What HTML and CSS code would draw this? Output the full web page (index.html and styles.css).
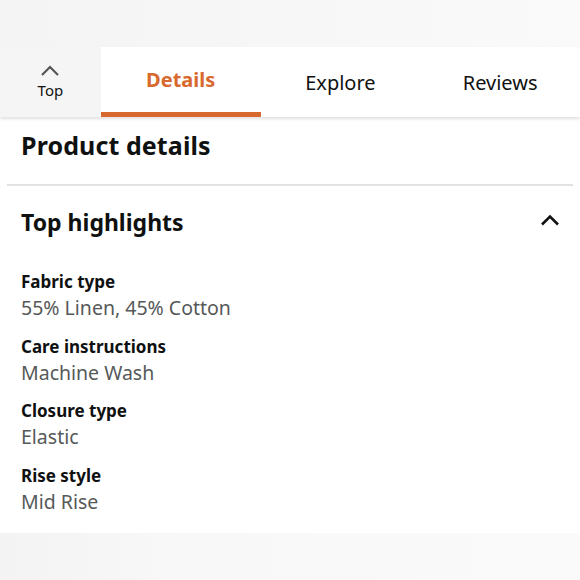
FILE: index.html
```html
<!DOCTYPE html>
<html>
<head>
<meta charset="utf-8">
<link rel="stylesheet" href="styles.css">
</head>
<body>
<div class="strip"></div>
<nav class="tabbar">
  <div class="tab-top">
    <svg class="top-chev" width="20" height="12" viewBox="0 0 20 12"><path d="M2 10 L10 2 L18 10" fill="none" stroke="#555" stroke-width="2.2"/></svg>
    <span class="top-label">Top</span>
  </div>
  <div class="tab active">Details</div>
  <div class="tab">Explore</div>
  <div class="tab">Reviews</div>
</nav>
<main class="card">
  <h1 class="title">Product details</h1>
  <hr class="divider">
  <div class="hl-head">
    <h2 class="hl-title">Top highlights</h2>
    <svg class="hl-chev" width="20" height="12" viewBox="0 0 20 12"><path d="M2 10.5 L10 2.5 L18 10.5" fill="none" stroke="#111" stroke-width="2.6"/></svg>
  </div>
  <dl class="attrs">
    <div class="attr"><dt>Fabric type</dt><dd>55% Linen, 45% Cotton</dd></div>
    <div class="attr"><dt>Care instructions</dt><dd>Machine Wash</dd></div>
    <div class="attr"><dt>Closure type</dt><dd>Elastic</dd></div>
    <div class="attr"><dt>Rise style</dt><dd>Mid Rise</dd></div>
  </dl>
</main>
<div class="foot"></div>
</body>
</html>
```
FILE: styles.css
```css
* { box-sizing: border-box; }
body {
  margin: 0;
  background: #f8f8f8;
  font-family: "Noto Sans", "Liberation Sans", sans-serif;
  color: #0f1111;
}
.strip {
  height: 47px;
  background: linear-gradient(90deg, #f4f4f4, #f8f7f7 50%, #fafafa);
}
.tabbar {
  display: flex;
  height: 70px;
  background: #fff;
  box-shadow: 0 2px 3px rgba(0,0,0,0.12);
  position: relative;
  z-index: 1;
}
.tab-top {
  width: 101px;
  background: #f5f5f5;
  display: flex;
  flex-direction: column;
  align-items: center;
  padding-top: 18px;
}
.top-chev { display: block; }
.top-label {
  font-size: 15px;
  line-height: 20px;
  margin-top: 3px;
  color: #111;
}
.tab {
  width: 160px;
  display: flex;
  justify-content: center;
  align-items: center;
  font-size: 20px;
  padding-top: 1px;
  color: #111;
}
.tab.active {
  color: #d8692e;
  font-weight: 700;
  border-bottom: 5px solid #d8692e;
  align-items: flex-start;
  padding-top: 19px;
}
.card {
  display: block;
  background: #fff;
  padding: 12px 0 18px;
}
.title {
  margin: 0 21px;
  font-size: 25px;
  line-height: 32px;
  font-weight: 700;
  letter-spacing: 0.1px;
}
.divider {
  margin: 23px 7px 0;
  border: 0;
  border-top: 2px solid #e2e2e2;
}
.hl-head {
  display: flex;
  align-items: center;
  justify-content: space-between;
  padding: 21px 20px 0 21px;
}
.hl-title {
  margin: 0;
  font-size: 23px;
  line-height: 30px;
  font-weight: 700;
}
.hl-chev { margin-top: -4px; }
.attrs {
  margin: 32px 21px 0;
  display: flex;
  flex-direction: column;
  gap: 12.5px;
}
.attr dt {
  font-size: 17px;
  line-height: 26px;
  font-weight: 700;
}
.attr dd {
  margin: 0;
  font-size: 19.5px;
  line-height: 26px;
  color: #565959;
}
.foot {
  height: 60px;
  background: linear-gradient(90deg, #f3f3f3, #f8f8f8 30%, #fafafa);
}
```
